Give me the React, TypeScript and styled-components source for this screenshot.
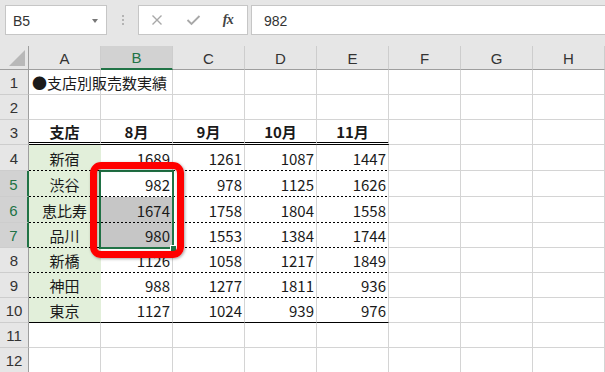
import React from "react";
import styled, { createGlobalStyle } from "styled-components";

const GlobalStyle = createGlobalStyle`
  html, body { margin: 0; padding: 0; background: #ffffff; overflow: hidden; }
  #root { width: 605px; height: 372px; overflow: hidden; }
`;

const GREEN = "#217346";
const GRID = "#d4d4d4";

const Page = styled.div`
  width: 605px;
  height: 372px;
  display: flex;
  flex-direction: column;
  background: #fff;
`;

const FormulaBar = styled.div`
  height: 46px;
  flex: none;
  box-sizing: border-box;
  background: #e6e6e6;
  display: flex;
  align-items: flex-start;
  padding: 5px 0 0 5px;
  font-family: "Liberation Sans", Arial, sans-serif;
`;

const Box = styled.div<{ $w?: number; $ml?: number; $grow?: boolean }>`
  height: 30px;
  box-sizing: border-box;
  background: #fff;
  border: 1px solid #c6c6c6;
  display: flex;
  align-items: center;
  width: ${(p) => (p.$w ? `${p.$w}px` : "auto")};
  margin-left: ${(p) => p.$ml ?? 0}px;
  flex: ${(p) => (p.$grow ? "1" : "none")};
  border-right: ${(p) => (p.$grow ? "none" : "1px solid #c6c6c6")};
  position: relative;
`;

const BoxText = styled.span<{ $pl: number }>`
  padding-left: ${(p) => p.$pl}px;
  font-size: 14px;
  color: #333;
  padding-top: 1px;
`;

const DropArrow = styled.span`
  position: absolute;
  right: 8px;
  top: 13px;
  width: 0;
  height: 0;
  border-left: 3.5px solid transparent;
  border-right: 3.5px solid transparent;
  border-top: 4px solid #777;
`;

const Dots = styled.div`
  width: 31px;
  height: 30px;
  display: flex;
  flex-direction: column;
  align-items: center;
  justify-content: center;
  gap: 2px;
  flex: none;
  & > i {
    width: 2px;
    height: 2px;
    background: #b4b4b4;
    display: block;
  }
`;

const FxIcon = styled.span`
  font-family: "Liberation Serif", "Times New Roman", serif;
  font-style: italic;
  font-weight: 700;
  font-size: 14px;
  color: #444;
  letter-spacing: -0.5px;
`;

const IconSlot = styled.span<{ $w: number }>`
  width: ${(p) => p.$w}px;
  display: flex;
  justify-content: center;
  align-items: center;
  flex: none;
`;

const GridWrap = styled.div`
  position: relative;
  flex: 1;
`;

const Sheet = styled.div`
  display: grid;
  grid-template-columns: 29px repeat(8, 72px);
  grid-template-rows: 24px 25px 25px 25px 26px 26px 26px 25px 25px 25px 25px 25px 25px;
  font-family: "Noto Sans CJK JP", "Noto Sans", sans-serif;
`;

const HeadCell = styled.div<{ $active?: boolean; $row?: boolean }>`
  box-sizing: border-box;
  background: ${(p) => (p.$active ? "#d2d2d2" : "#e6e6e6")};
  color: ${(p) => (p.$active ? GREEN : "#333")};
  font-family: "Liberation Sans", Arial, sans-serif;
  font-size: 15px;
  display: flex;
  align-items: center;
  justify-content: center;
  border-right: ${(p) =>
    p.$row ? (p.$active ? `2px solid ${GREEN}` : "1px solid #9e9e9e") : "1px solid #cdcdcd"};
  border-bottom: ${(p) =>
    p.$row ? "1px solid #cdcdcd" : p.$active ? `2px solid ${GREEN}` : "1px solid #9e9e9e"};
  padding-top: 1px;
`;

const Corner = styled.div`
  box-sizing: border-box;
  background: #e6e6e6;
  border-right: 1px solid #9e9e9e;
  border-bottom: 1px solid #9e9e9e;
  position: relative;
  &::after {
    content: "";
    position: absolute;
    right: 3px;
    bottom: 3px;
    width: 0;
    height: 0;
    border-left: 16px solid transparent;
    border-bottom: 16px solid #b8b8b8;
  }
`;

type Bottom = "grid" | "dotted" | "double" | "solid" | "none";

const Cell = styled.div<{
  $align?: "left" | "center" | "right";
  $bold?: boolean;
  $fill?: string;
  $bottom?: Bottom;
  $noRight?: boolean;
  $overflow?: boolean;
}>`
  box-sizing: border-box;
  position: relative;
  background: ${(p) => p.$fill ?? "#fff"};
  border-right: 1px solid ${(p) => (p.$noRight ? p.$fill ?? "#fff" : GRID)};
  border-bottom: ${(p) =>
    p.$bottom === "double"
      ? "3px double #000"
      : p.$bottom === "solid"
      ? "1px solid #000"
      : p.$bottom === "dotted" || p.$bottom === "none"
      ? "none"
      : `1px solid ${GRID}`};
  display: flex;
  align-items: center;
  justify-content: ${(p) =>
    p.$align === "right" ? "flex-end" : p.$align === "center" ? "center" : "flex-start"};
  padding: ${(p) => (p.$align === "right" ? "0 2px 0 0" : p.$align === "left" ? "0 0 0 3px" : "0")};
  font-size: 15px;
  font-weight: ${(p) => (p.$bold ? 700 : 400)};
  color: #1a1a1a;
  white-space: nowrap;
  overflow: ${(p) => (p.$overflow ? "visible" : "hidden")};
  z-index: ${(p) => (p.$overflow ? 1 : 0)};
  ${(p) =>
    p.$bottom === "dotted"
      ? `&::after {
    content: "";
    position: absolute;
    left: 0;
    right: -1px;
    bottom: 0;
    height: 1px;
    background: repeating-linear-gradient(to right, #000 0 2px, transparent 2px 4px);
  }`
      : ""}
`;

const SelectionBox = styled.div`
  position: absolute;
  left: 99px;
  top: 124px;
  width: 75px;
  height: 79px;
  box-sizing: border-box;
  border: 2px solid ${GREEN};
  pointer-events: none;
  z-index: 3;
`;

const FillHandle = styled.div`
  position: absolute;
  right: -5px;
  bottom: -5px;
  width: 7px;
  height: 7px;
  box-sizing: border-box;
  background: ${GREEN};
  border: 1px solid #fff;
`;

const Annotation = styled.div`
  position: absolute;
  left: 90px;
  top: 116px;
  width: 94px;
  height: 96px;
  box-sizing: border-box;
  border: 7px solid #ff0000;
  border-radius: 11px;
  box-shadow: 1px 1px 3px rgba(0, 0, 0, 0.35), inset 1px 1px 3px rgba(0, 0, 0, 0.3);
  pointer-events: none;
  z-index: 4;
`;

const cols = ["A", "B", "C", "D", "E", "F", "G", "H"];
const months = ["8月", "9月", "10月", "11月"];
const data: [string, number[]][] = [
  ["新宿", [1689, 1261, 1087, 1447]],
  ["渋谷", [982, 978, 1125, 1626]],
  ["恵比寿", [1674, 1758, 1804, 1558]],
  ["品川", [980, 1553, 1384, 1744]],
  ["新橋", [1126, 1058, 1217, 1849]],
  ["神田", [988, 1277, 1811, 936]],
  ["東京", [1127, 1024, 939, 976]],
];

const XIcon = () => (
  <svg width="12" height="12" viewBox="0 0 12 12">
    <path d="M1.5 1.5 L10.5 10.5 M10.5 1.5 L1.5 10.5" stroke="#a8a8a8" strokeWidth="1.4" fill="none" />
  </svg>
);

const CheckIcon = () => (
  <svg width="15" height="12" viewBox="0 0 15 12">
    <path d="M1.5 6 L5.5 10 L13.5 2" stroke="#a8a8a8" strokeWidth="1.8" fill="none" />
  </svg>
);

function EmptyCells({ from }: { from: number }) {
  return (
    <>
      {cols.slice(from).map((c) => (
        <Cell key={c} />
      ))}
    </>
  );
}

export default function App() {
  return (
    <Page>
      <GlobalStyle />
      <FormulaBar>
        <Box $w={102}>
          <BoxText $pl={7}>B5</BoxText>
          <DropArrow />
        </Box>
        <Dots>
          <i />
          <i />
          <i />
        </Dots>
        <Box $w={110}>
          <IconSlot $w={36}>
            <XIcon />
          </IconSlot>
          <IconSlot $w={36}>
            <CheckIcon />
          </IconSlot>
          <IconSlot $w={34}>
            <FxIcon>fx</FxIcon>
          </IconSlot>
        </Box>
        <Box $ml={3} $grow>
          <BoxText $pl={12}>982</BoxText>
        </Box>
      </FormulaBar>
      <GridWrap>
        <Sheet>
          <Corner />
          {cols.map((c) => (
            <HeadCell key={c} $active={c === "B"}>
              {c}
            </HeadCell>
          ))}

          <HeadCell $row>1</HeadCell>
          <Cell $align="left" $overflow>
            ●支店別販売数実績
          </Cell>
          <EmptyCells from={1} />

          <HeadCell $row>2</HeadCell>
          <EmptyCells from={0} />

          <HeadCell $row>3</HeadCell>
          <Cell $align="center" $bold $bottom="double">
            支店
          </Cell>
          {months.map((m) => (
            <Cell key={m} $align="center" $bold $bottom="double">
              {m}
            </Cell>
          ))}
          <EmptyCells from={5} />

          {data.map(([name, nums], i) => {
            const row = i + 4;
            const bottom: Bottom = row === 10 ? "solid" : "dotted";
            const active = row >= 5 && row <= 7;
            return (
              <React.Fragment key={name}>
                <HeadCell $row $active={active}>
                  {row}
                </HeadCell>
                <Cell $align="center" $fill="#e2efda" $noRight $bottom={bottom}>
                  {name}
                </Cell>
                {nums.map((n, j) => (
                  <Cell
                    key={j}
                    $align="right"
                    $bottom={bottom}
                    $fill={j === 0 && (row === 6 || row === 7) ? "#c6c6c6" : undefined}
                  >
                    {n}
                  </Cell>
                ))}
                <EmptyCells from={5} />
              </React.Fragment>
            );
          })}

          <HeadCell $row>11</HeadCell>
          <EmptyCells from={0} />
          <HeadCell $row>12</HeadCell>
          <EmptyCells from={0} />
        </Sheet>
        <SelectionBox>
          <FillHandle />
        </SelectionBox>
        <Annotation />
      </GridWrap>
    </Page>
  );
}
